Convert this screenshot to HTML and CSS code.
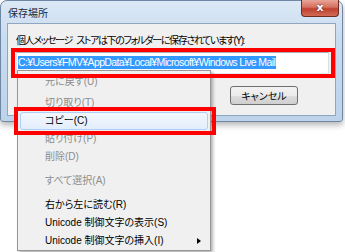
FILE: index.html
```html
<!DOCTYPE html>
<html lang="ja">
  <head>
    <meta charset="UTF-8">
    <title>保存場所</title>
    <link rel="stylesheet" href="styles.css">
  </head>
  <body>
    <div class="screen">
      <div class="window">
        <div class="titlebar">
          <span class="title">保存場所</span>
          <span class="close">x</span>
        </div>

        <div class="client">
          <div class="label">個人メッセージ ストアは下のフォルダーに保存されています(Y):</div>
          <div class="field">
            <span class="selected">C:¥Users¥FMV¥AppData¥Local¥Microsoft¥Windows Live Mail</span>
          </div>
          <div class="buttons">
            <button class="cancel">キャンセル</button>
          </div>
        </div>
      </div>

      <div class="menu">
        <div class="item disabled">元に戻す(U)</div>
        <div class="sep small"></div>
        <div class="item disabled">切り取り(T)</div>
        <div class="item hover">コピー(C)</div>
        <div class="item disabled">貼り付け(P)</div>
        <div class="item disabled">削除(D)</div>
        <div class="sep"></div>
        <div class="item disabled">すべて選択(A)</div>
        <div class="sep"></div>
        <div class="item">右から左に読む(R)</div>
        <div class="item">Unicode 制御文字の表示(S)</div>
        <div class="item">Unicode 制御文字の挿入(I)<span class="arrow"></span></div>
      </div>

      <div class="mark mark-field"></div>
      <div class="mark mark-copy"></div>
    </div>
  </body>
</html>
```

FILE: styles.css
```css
* {
  margin: 0;
  padding: 0;
  box-sizing: border-box;
}

body {
  background: #ffffff;
  font-family: "Liberation Sans", "Noto Sans CJK JP", sans-serif;
  font-size: 11px;
  color: #000000;
}

.screen {
  position: relative;
  width: 345px;
  height: 252px;
  overflow: hidden;
}

.window {
  width: 343px;
  height: 122px;
  border: 1px solid #6f87a2;
  border-radius: 7px 7px 3px 3px;
  background: linear-gradient(180deg, #dbe8f5 0%, #c9dcf0 30%, #bdd3ea 100%);
  padding: 0 6px 5px 6px;
  display: flex;
  flex-direction: column;
  box-shadow: 0 3px 6px rgba(0, 0, 0, 0.3);
}

.titlebar {
  height: 22px;
  display: flex;
  justify-content: space-between;
}

.title {
  padding: 4px 0 0 1px;
  font-size: 10px;
  color: #1e2a38;
}

.close {
  width: 38px;
  height: 17px;
  margin: -1px -3px 0 0;
  border: 1px solid #6e2c24;
  border-top: none;
  border-radius: 0 0 4px 4px;
  background: linear-gradient(180deg, #e8a598 0%, #d5705f 45%, #c0412f 55%, #d06a55 100%);
  color: #ffffff;
  font-family: "DejaVu Sans", sans-serif;
  font-weight: bold;
  font-size: 11px;
  line-height: 15px;
  text-align: center;
  text-shadow: 0 0 2px #5a1a12;
}

.client {
  flex-grow: 1;
  background: #f0f0f0;
  border: 1px solid #8fa6bf;
  padding: 10px 8px 0 8px;
}

.label {
  height: 14px;
  line-height: 14px;
  font-size: 10px;
  letter-spacing: -1.4px;
  word-spacing: 3px;
  font-feature-settings: "palt";
  white-space: nowrap;
}

.field {
  margin-top: 4px;
  width: 313px;
  height: 22px;
  border: 1px solid #abadb3;
  border-color: #abadb3 #dbdfe6 #e3e9ef #e2e3ea;
  background: #ffffff;
  padding: 3px 0 0 1px;
  white-space: nowrap;
}

.selected {
  display: inline-block;
  height: 13px;
  line-height: 13px;
  padding-right: 1px;
  background: #3399ff;
  color: #ffffff;
  font-size: 10.5px;
  letter-spacing: -0.62px;
}

.buttons {
  display: flex;
  justify-content: flex-end;
  margin-top: 12px;
  padding-right: 29px;
}

.cancel {
  width: 68px;
  height: 19px;
  border: 1px solid #707070;
  border-radius: 3px;
  background: linear-gradient(180deg, #f2f2f2 0%, #ebebeb 50%, #dddddd 51%, #cfcfcf 100%);
  font-family: "Noto Sans CJK JP", sans-serif;
  font-size: 10px;
  font-feature-settings: "palt";
  color: #000000;
}

.menu {
  position: absolute;
  left: 17px;
  top: 70px;
  width: 194px;
  height: 181px;
  border: 1px solid #979797;
  background: #f0f0f0;
  padding: 2px;
  box-shadow: 2px 2px 3px rgba(0, 0, 0, 0.3);
  font-size: 10px;
  font-feature-settings: "palt";
}

.menu > .item {
  height: 18px;
  line-height: 18px;
  padding-left: 25px;
  display: flex;
  align-items: center;
  white-space: nowrap;
}

.menu > .item.disabled {
  color: #8d8d8d;
}

.menu > .item.hover {
  border: 1px solid #aecff7;
  border-radius: 3px;
  background: linear-gradient(180deg, #f2f7fe 0%, #e3eefb 100%);
  padding-left: 24px;
}

.menu > .sep {
  height: 6px;
  margin-left: 25px;
}

.menu > .sep.small {
  height: 3px;
}

.arrow {
  margin-left: auto;
  margin-right: 7px;
  border-left: 4px solid #000000;
  border-top: 3px solid transparent;
  border-bottom: 3px solid transparent;
}

.mark {
  position: absolute;
  border: 4px solid #ff0000;
}

.mark-field {
  left: 11px;
  top: 48px;
  width: 324px;
  height: 30px;
}

.mark-copy {
  left: 14px;
  top: 107px;
  width: 202px;
  height: 28px;
}
```
